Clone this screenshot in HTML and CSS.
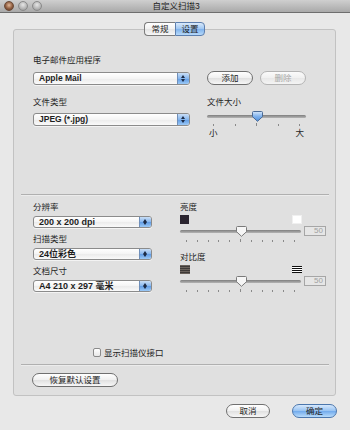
FILE: index.html
```html
<!DOCTYPE html>
<html lang="zh-CN">
<head>
    <meta charset="UTF-8">
    <title>自定义扫描3</title>
    <link rel="stylesheet" href="styles.css">
</head>
<body>
<div class="window">
    <div class="titlebar">
        <div class="lights">
            <span class="light close"></span>
            <span class="light"></span>
            <span class="light"></span>
        </div>
        <div class="title">自定义扫描3</div>
    </div>

    <div class="tabs">
        <span class="tab">常规</span><span class="tab active">设置</span>
    </div>

    <div class="group">
        <div class="upper">
            <div class="label">电子邮件应用程序</div>
            <div class="app-row">
                <div class="popup big"><span class="value">Apple Mail</span><span class="arrows"></span></div>
                <button class="btn add">添加</button>
                <button class="btn del" disabled>删除</button>
            </div>
            <div class="type-row">
                <div class="type-col">
                    <div class="label">文件类型</div>
                    <div class="popup big mt6"><span class="value">JPEG (*.jpg)</span><span class="arrows"></span></div>
                </div>
                <div class="size-col">
                    <div class="label">文件大小</div>
                    <div class="slider size">
                        <div class="track"></div>
                        <svg class="thumb" width="11" height="11" viewBox="0 0 11 11">
                            <defs>
                                <linearGradient id="blueThumb" x1="0" y1="0" x2="0" y2="1">
                                    <stop offset="0" stop-color="#d5e7fb"/>
                                    <stop offset="0.5" stop-color="#7fb1ec"/>
                                    <stop offset="1" stop-color="#4f8fdc"/>
                                </linearGradient>
                            </defs>
                            <path d="M1.5 0.5h8a1 1 0 0 1 1 1v4.2l-5 4.6l-5-4.6v-4.2a1 1 0 0 1 1-1z" fill="url(#blueThumb)" stroke="#4a6a96"/>
                        </svg>
                    </div>
                    <div class="ticks">
                        <i></i><i></i><i class="mid"></i><i></i><i></i>
                    </div>
                    <div class="ends"><span>小</span><span>大</span></div>
                </div>
            </div>
        </div>

        <div class="sep"></div>

        <div class="lower">
            <div class="lower-left">
                <div class="label">分辨率</div>
                <div class="popup small"><span class="value">200 x 200 dpi</span><span class="arrows"></span></div>
                <div class="label gap">扫描类型</div>
                <div class="popup small"><span class="value">24位彩色</span><span class="arrows"></span></div>
                <div class="label gap">文档尺寸</div>
                <div class="popup small"><span class="value">A4 210 x 297 毫米</span><span class="arrows"></span></div>
            </div>
            <div class="lower-right">
                <div class="label">亮度</div>
                <div class="icon-row">
                    <span class="sq dark"></span>
                    <span class="sq white"></span>
                </div>
                <div class="slider-row">
                    <div class="slider wide">
                        <div class="track"></div>
                        <svg class="thumb" width="11" height="11" viewBox="0 0 11 11">
                            <path d="M1.5 0.5h8a1 1 0 0 1 1 1v4.2l-5 4.6l-5-4.6v-4.2a1 1 0 0 1 1-1z" fill="#f6f6f6" stroke="#7a7a7a"/>
                        </svg>
                    </div>
                    <div class="field">50</div>
                </div>
                <div class="ticks wide-ticks">
                    <i></i><i></i><i></i><i></i><i></i><i class="mid"></i><i></i><i></i><i></i><i></i><i></i>
                </div>

                <div class="label gap-b">对比度</div>
                <div class="icon-row">
                    <span class="sq low-contrast"></span>
                    <span class="sq high-contrast"></span>
                </div>
                <div class="slider-row">
                    <div class="slider wide">
                        <div class="track"></div>
                        <svg class="thumb" width="11" height="11" viewBox="0 0 11 11">
                            <path d="M1.5 0.5h8a1 1 0 0 1 1 1v4.2l-5 4.6l-5-4.6v-4.2a1 1 0 0 1 1-1z" fill="#f6f6f6" stroke="#7a7a7a"/>
                        </svg>
                    </div>
                    <div class="field">50</div>
                </div>
                <div class="ticks wide-ticks">
                    <i></i><i></i><i></i><i></i><i></i><i class="mid"></i><i></i><i></i><i></i><i></i><i></i>
                </div>
            </div>
        </div>

        <label class="check-row">
            <span class="checkbox"></span>
            <span>显示扫描仪接口</span>
        </label>

        <div class="sep sep2"></div>

        <div class="reset-row">
            <button class="btn reset">恢复默认设置</button>
        </div>
    </div>

    <div class="footer">
        <button class="btn cancel">取消</button>
        <button class="btn ok">确定</button>
    </div>
</div>
</body>
</html>
```

FILE: styles.css
```css
* {
    box-sizing: border-box;
}
body {
    margin: 0;
    font-family: "Liberation Sans", "Noto Sans CJK SC", sans-serif;
    font-size: 8.5px;
    color: #1e1e1e;
    background: #e8e8e8;
}
.window {
    width: 350px;
    height: 430px;
    background: #e8e8e8;
    overflow: hidden;
}

/* title bar */
.titlebar {
    height: 13px;
    display: flex;
    align-items: center;
    background: linear-gradient(#cfcfcf, #a9a9a9);
    border-bottom: 1px solid #6e6e6e;
}
.lights {
    display: flex;
    gap: 4px;
    padding-left: 4px;
}
.light {
    width: 10px;
    height: 10px;
    border-radius: 50%;
    background: radial-gradient(circle at 50% 35%, #e6e6e6, #b4b4b4 60%, #8f8f8f);
    border: 1px solid #8a8a8a;
}
.light.close {
    background: radial-gradient(circle at 50% 40%, #e2b899, #8f5d40 55%, #5a3620);
    border-color: #6a4a38;
}
.title {
    flex: 1;
    text-align: center;
    margin-right: 40px;
    line-height: 12px;
    font-size: 8.5px;
    color: #222;
}

/* tabs */
.tabs {
    display: flex;
    justify-content: center;
    margin-top: 9px;
    padding-right: 1px;
    position: relative;
    z-index: 1;
}
.tab {
    height: 14px;
    width: 31px;
    line-height: 12px;
    text-align: center;
    border: 1px solid #7c7c7c;
    background: linear-gradient(#ffffff, #f1f1f1 50%, #e4e4e4 51%, #f7f7f7);
}
.tab:first-child {
    border-radius: 4px 0 0 4px;
    border-right: none;
}
.tab.active {
    width: 30px;
    border-radius: 0 4px 4px 0;
    border-color: #5d7fae;
    background: linear-gradient(#d9e9fb, #9ec6f2 50%, #7fb2ec 51%, #b6d9fa);
}

/* group box */
.group {
    margin: -7px 14px 0 13px;
    height: 367px;
    border: 1px solid #c2c2c2;
    border-radius: 3px;
    background: #e0e0e0;
}
.label {
    line-height: 10px;
    height: 10px;
    white-space: nowrap;
}
.upper {
    padding: 25px 0 0 19px;
    height: 164px;
}
.app-row {
    display: flex;
    align-items: center;
    margin-top: 6px;
}
.mt6 {
    margin-top: 6px;
}
.type-row {
    display: flex;
    margin-top: 12px;
}
.type-col {
    width: 157px;
}
.size-col {
    width: 99px;
    margin-left: 17px;
}

/* popup buttons */
.popup {
    display: flex;
    align-items: stretch;
    border: 1px solid #8b8b8b;
    border-radius: 3px;
    background: linear-gradient(#ffffff, #f4f4f4 50%, #ebebeb 51%, #fafafa);
    box-shadow: 0 1px 0 rgba(255, 255, 255, 0.6);
    font-weight: bold;
    overflow: hidden;
}
.popup.big {
    width: 157px;
    height: 13px;
}
.popup.small {
    width: 119px;
    height: 12px;
    margin-top: 4px;
    font-size: 9px;
}
.popup .value {
    flex: 1;
    padding-left: 5px;
    line-height: 11px;
    white-space: nowrap;
}
.popup.small .value {
    line-height: 10px;
}
.arrows {
    width: 12px;
    border-left: 1px solid #6f8fba;
    background: linear-gradient(#c9def6, #86b6ee 50%, #5f9be4 51%, #9cc9f6);
    position: relative;
}
.arrows::before,
.arrows::after {
    content: "";
    position: absolute;
    left: 3px;
    border-left: 2.5px solid transparent;
    border-right: 2.5px solid transparent;
}
.arrows::before {
    top: 2px;
    border-bottom: 3px solid #1c2b45;
}
.arrows::after {
    bottom: 2px;
    border-top: 3px solid #1c2b45;
}

/* push buttons */
.btn {
    font-family: inherit;
    font-size: 8.5px;
    color: #1e1e1e;
    height: 14px;
    padding: 0;
    line-height: 12px;
    border: 1px solid #707070;
    border-radius: 7px;
    background: linear-gradient(#ffffff, #f0f0f0 50%, #e0e0e0 51%, #f7f7f7);
}
.btn.add {
    width: 46px;
    margin-left: 17px;
}
.btn.del {
    width: 46px;
    margin-left: 7px;
    color: #a8a8a8;
    border-color: #b4b4b4;
    background: linear-gradient(#fbfbfb, #f0f0f0 50%, #e8e8e8 51%, #f4f4f4);
}

/* sliders */
.slider {
    position: relative;
    height: 11px;
    margin-top: 4px;
}
.track {
    position: absolute;
    left: 0;
    right: 0;
    top: 4px;
    height: 3px;
    border-radius: 2px;
    background: linear-gradient(#7e7e7e, #b5b5b5);
}
.thumb {
    position: absolute;
    top: 0;
    left: 50%;
    margin-left: -5px;
}
.ticks {
    display: flex;
    justify-content: space-between;
    padding: 0 6px;
    height: 4px;
    margin-top: 1px;
}
.ticks i {
    width: 1px;
    height: 2px;
    margin-top: 1px;
    background: #8a8a8a;
}
.ticks i.mid {
    height: 3px;
    margin-top: 0;
}
.ends {
    display: flex;
    justify-content: space-between;
    padding: 0 2px;
    margin-top: 1px;
    line-height: 10px;
}

/* separators */
.sep {
    height: 2px;
    margin: 0 6px 0 7px;
    border-top: 1px solid #b0b0b0;
    border-bottom: 1px solid #ececec;
}

/* lower section */
.lower {
    display: flex;
    padding: 6px 0 0 19px;
    height: 98px;
}
.lower-left {
    width: 119px;
}
.label.gap {
    margin-top: 6px;
}
.lower-right {
    width: 146px;
    margin-left: 28px;
}
.icon-row {
    display: flex;
    justify-content: space-between;
    width: 122px;
    margin-top: 3px;
}
.sq {
    width: 9px;
    height: 9px;
}
.sq.dark {
    background: #2b2530;
}
.sq.white {
    width: 10px;
    background: #ffffff;
    border: 1px solid #f0f0f0;
}
.sq.low-contrast {
    width: 10px;
    background: repeating-linear-gradient(#6a625c 0, #6a625c 1px, #3e3a38 1px, #3e3a38 2px);
}
.sq.high-contrast {
    width: 10px;
    background: repeating-linear-gradient(#111 0, #111 1px, #fff 1px, #fff 2px);
    border: 1px solid #ddd;
    border-left: none;
    border-right: none;
}
.slider-row {
    display: flex;
    align-items: center;
    height: 12px;
    margin-top: 1px;
}
.slider.wide {
    width: 121px;
    margin-top: 0;
}
.field {
    width: 22px;
    height: 10px;
    margin-left: 3px;
    border: 1px solid #a6a6a6;
    background: #e6e6e6;
    color: #a0a0a0;
    text-align: right;
    padding-right: 2px;
    line-height: 8px;
    font-size: 8px;
}
.wide-ticks {
    width: 121px;
    margin-top: 2px;
}
.label.gap-b {
    margin-top: 9px;
}

/* checkbox */
.check-row {
    display: flex;
    align-items: center;
    gap: 3px;
    margin-top: 53px;
    padding-left: 79px;
    height: 10px;
}
.checkbox {
    width: 8px;
    height: 9px;
    border: 1px solid #8a8a8a;
    border-radius: 2px;
    background: linear-gradient(#ffffff, #e8e8e8);
}
.sep2 {
    margin-top: 7px;
}
.reset-row {
    padding: 7px 0 0 18px;
}
.btn.reset {
    width: 86px;
}

/* footer */
.footer {
    display: flex;
    justify-content: flex-end;
    gap: 22px;
    margin: 8px 13px 0 0;
}
.btn.cancel {
    width: 44px;
}
.btn.ok {
    width: 45px;
    border-color: #4c77ad;
    background: linear-gradient(#d6e8fc, #96c2f2 50%, #70aaec 51%, #b9dcfb);
}
```
